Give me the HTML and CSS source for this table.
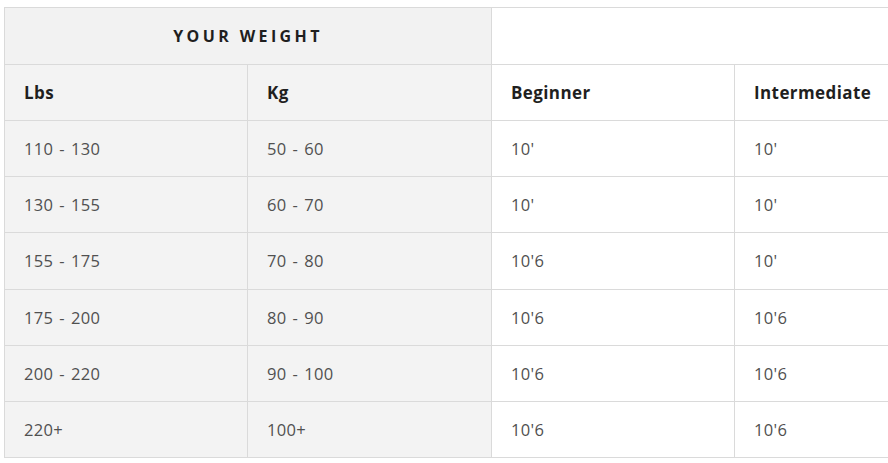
FILE: index.html
```html
<!DOCTYPE html>
<html>
<head>
<meta charset="utf-8">
<link rel="stylesheet" href="styles.css">
</head>
<body>
<table class="size-table">
  <colgroup>
    <col class="col-a"><col class="col-b"><col class="col-a"><col class="col-b">
  </colgroup>
  <thead>
    <tr class="row-top">
      <th class="group-head" colspan="2">YOUR WEIGHT</th>
      <th class="blank-head" colspan="2"></th>
    </tr>
    <tr class="row-head">
      <th class="shade">Lbs</th>
      <th class="shade">Kg</th>
      <th>Beginner</th>
      <th>Intermediate</th>
    </tr>
  </thead>
  <tbody>
    <tr><td class="shade">110 - 130</td><td class="shade">50 - 60</td><td>10'</td><td>10'</td></tr>
    <tr><td class="shade">130 - 155</td><td class="shade">60 - 70</td><td>10'</td><td>10'</td></tr>
    <tr><td class="shade">155 - 175</td><td class="shade">70 - 80</td><td>10'6</td><td>10'</td></tr>
    <tr><td class="shade">175 - 200</td><td class="shade">80 - 90</td><td>10'6</td><td>10'6</td></tr>
    <tr><td class="shade">200 - 220</td><td class="shade">90 - 100</td><td>10'6</td><td>10'6</td></tr>
    <tr><td class="shade">220+</td><td class="shade">100+</td><td>10'6</td><td>10'6</td></tr>
  </tbody>
</table>
</body>
</html>
```
FILE: styles.css
```css
html, body {
  margin: 0;
  padding: 0;
  background: #ffffff;
  overflow: hidden;
}
body {
  padding: 7px 0 0 4px;
  font-family: "Open Sans", "Liberation Sans", sans-serif;
}
.size-table {
  border-collapse: collapse;
  table-layout: fixed;
  width: 974px;
}
.col-a { width: 243px; }
.col-b { width: 244px; }
.size-table th,
.size-table td {
  border: 1px solid #dadada;
  text-align: left;
  padding: 0 0 0 19px;
  box-sizing: border-box;
}
.size-table td {
  font-size: 16.5px;
  letter-spacing: 0.3px;
  word-spacing: 1.5px;
  color: #505050;
  font-weight: 400;
}
.size-table th {
  font-size: 17px;
  font-weight: 700;
  letter-spacing: 0.4px;
  color: #1f1f1f;
}
.row-top th { height: 57px; }
.row-head th { height: 56px; }
.group-head {
  background: #f2f2f2;
  text-align: center !important;
  padding: 0 !important;
  letter-spacing: 3.4px !important;
  font-size: 16px !important;
}
.blank-head { background: #ffffff; }
.shade { background: #f3f3f3; }
.size-table tbody tr { height: 56.2px; }
.size-table tbody td { height: 56.2px; }
```
